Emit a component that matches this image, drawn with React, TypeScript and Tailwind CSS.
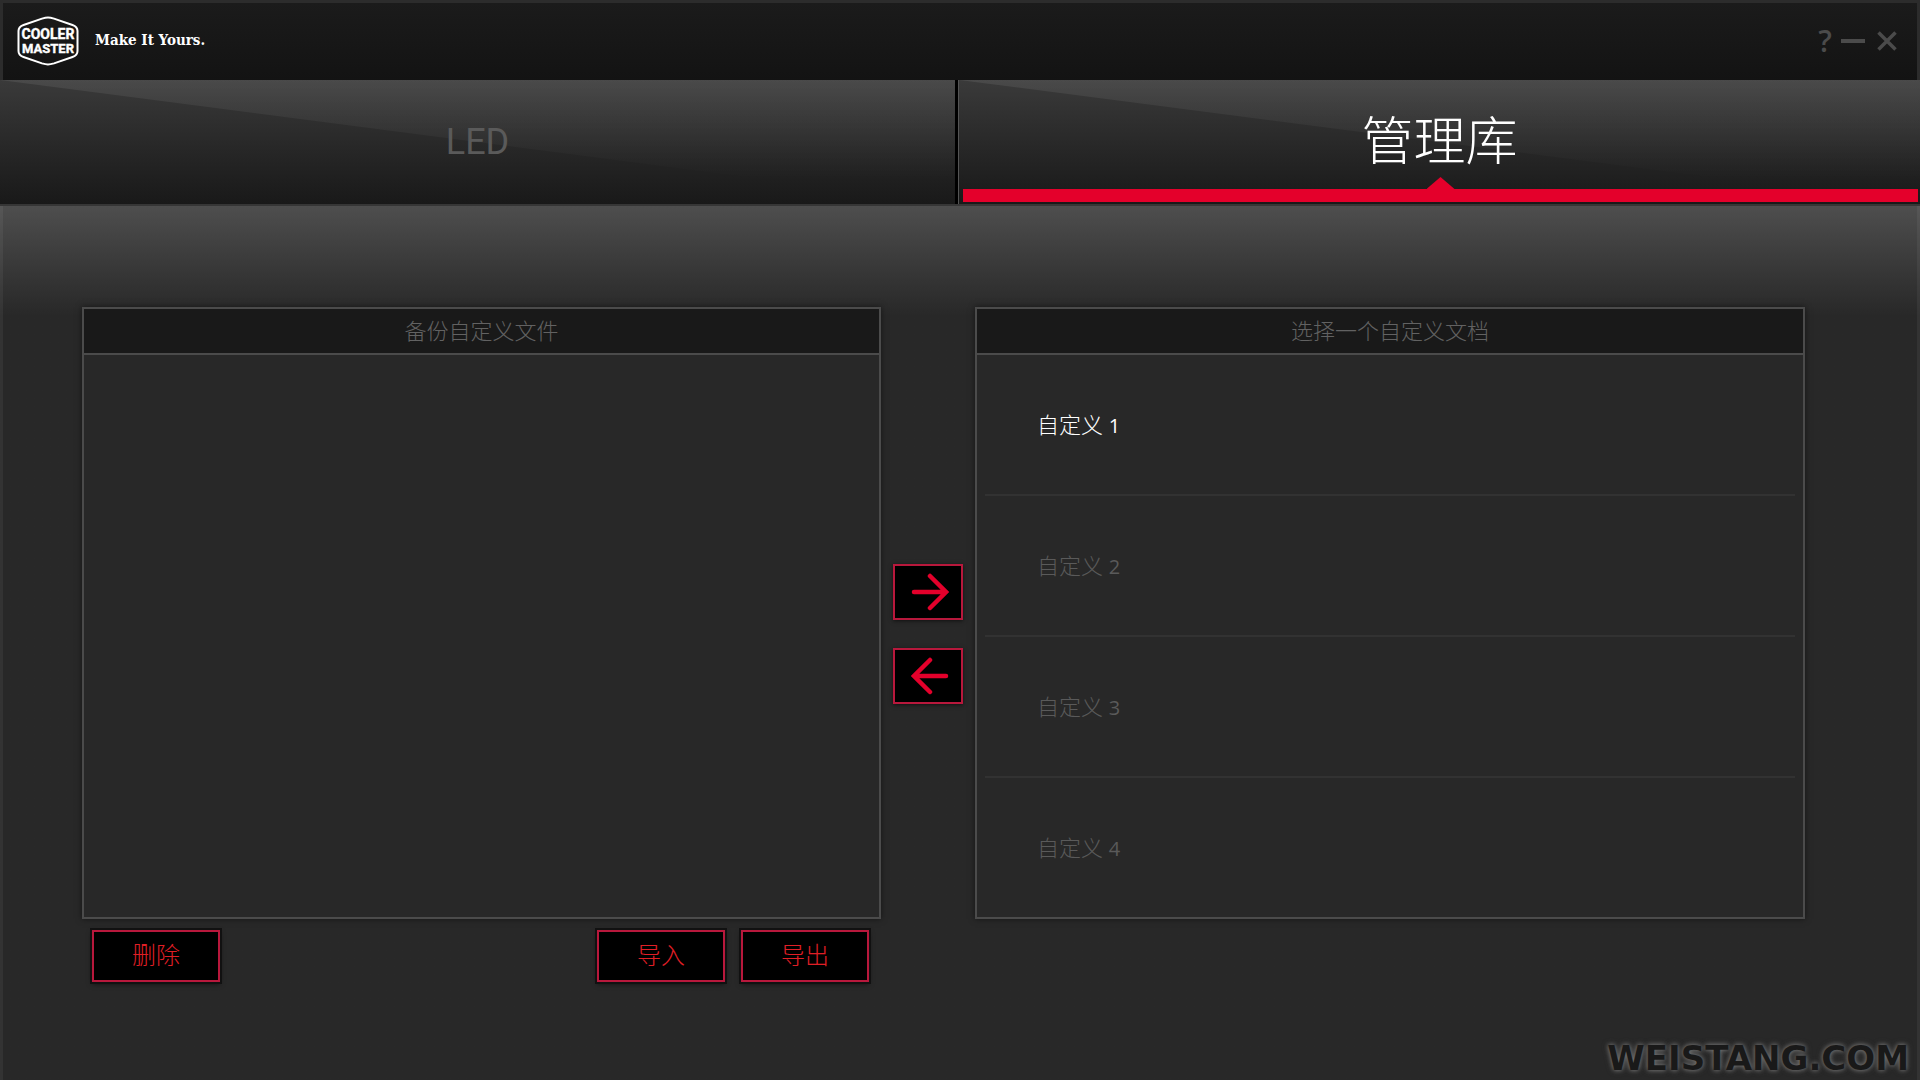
import { useState } from "react";

const tabs = ["LED", "管理库"];
const profiles = [1, 2, 3, 4];

function BrandMark() {
  return (
    <svg viewBox="0 0 62 50" className="h-[50px] w-[62px]" role="img" aria-label="Cooler Master">
      <path
        d="M31 1.5c2.2 0 4 .5 6 1.100l18.500 6.400c3.500 1.200 5 2.800 5 6v20c0 3.200-1.500 4.800-5 6L37 47.400c-2 .6-3.800 1.100-6 1.100s-4-.5-6-1.100L6.500 41c-3.500-1.200-5-2.800-5-6V15c0-3.200 1.500-4.800 5-6L25 2.600c2-.6 3.800-1.100 6-1.100z"
        fill="none"
        stroke="#fff"
        strokeWidth="2"
      />
      <g fill="#fff" stroke="#fff" strokeWidth="0.4" fontFamily="Roboto, sans-serif" fontSize="14" fontWeight="700" textAnchor="middle">
        <text x="31" y="23">COOLER</text>
        <text x="31" y="37" fontSize="13">MASTER</text>
      </g>
    </svg>
  );
}

function TitleBar() {
  return (
    <header className="flex h-20 items-center border-x-3 border-t-3 border-[#2c2c2c] bg-linear-to-b from-[#1b1b1b] to-[#131313] pr-4 pb-[2px] pl-[14px]">
      <BrandMark />
      <p className="ml-4 flex-1 font-['DejaVu_Serif_Condensed','DejaVu_Serif',serif] text-[15px] font-bold text-white">
        Make It Yours.
      </p>
      <div className="flex items-center gap-2 text-[#4b4b4b]">
        <button type="button" aria-label="帮助" className="w-4 text-center font-['Open_Sans',sans-serif] text-[30px] leading-8 font-semibold">
          ?
        </button>
        <button type="button" aria-label="最小化" className="flex h-8 w-6 items-center">
          <span className="h-1 w-full bg-[#4b4b4b]" />
        </button>
        <button type="button" aria-label="关闭" className="flex h-8 w-7 items-center justify-center">
          <svg viewBox="0 0 20 20" className="size-5" stroke="currentColor" strokeWidth="3.5" aria-hidden="true">
            <path d="M1.500 1.500l17 17M18.500 1.500l-17 17" />
          </svg>
        </button>
      </div>
    </header>
  );
}

function TabBar({ current, onChange }: { current: number; onChange: (i: number) => void }) {
  return (
    <nav role="tablist" className="grid h-[126px] grid-cols-2 border-b-2 border-[#363636]">
      {tabs.map((tab, i) => {
        const active = current === i;
        return (
          <button
            key={tab}
            type="button"
            role="tab"
            aria-selected={active}
            onClick={() => onChange(i)}
            className={`relative flex items-center justify-center bg-linear-to-b from-[#3a3a3a] to-[#191919] ${
              i === 0 ? "mr-[2px] border-r-3 border-black" : "-ml-[2px] border-l border-[#555]"
            }`}
          >
            <span className="absolute inset-0 bg-linear-to-b from-white/8 to-transparent to-80% [clip-path:polygon(0_0,100%_0,100%_100%)]" />
            <span
              className={`relative ${
                tab === "LED"
                  ? "font-['Roboto',sans-serif] text-[36px] leading-none"
                  : "-mt-2 font-['Noto_Sans_CJK_SC',sans-serif] text-[52px] leading-none font-light"
              } ${active ? "text-white" : "text-[#5a5a5a]"}`}
            >
              {tab}
            </span>
            {active && (
              <span className="absolute right-[2px] bottom-[2px] left-1 flex flex-col items-center">
                <span className="h-3 w-7 bg-[#e4002b] [clip-path:polygon(50%_0,100%_100%,0_100%)]" />
                <span className="h-[13px] w-full bg-[#e4002b]" />
              </span>
            )}
          </button>
        );
      })}
    </nav>
  );
}

function Panel({ title, children }: { title: string; children?: React.ReactNode }) {
  return (
    <section className="flex min-h-[612px] flex-col border-2 border-[#4b4b4b] bg-[#282828] shadow-[0_0_6px_rgba(0,0,0,0.5)]">
      <h2 className="border-b-2 border-[#4b4b4b] bg-[#191919] pb-[2px] text-center text-[22px] leading-[42px] font-light text-[#626262]">
        {title}
      </h2>
      {children}
    </section>
  );
}

function ArrowButton({ label, path }: { label: string; path: string }) {
  return (
    <button
      type="button"
      aria-label={label}
      className="flex h-14 w-[70px] items-center justify-center border-2 border-[#b8183c] bg-black pl-1 shadow-[0_1px_4px_rgba(0,0,0,0.6)]"
    >
      <svg viewBox="0 0 38 38" className="size-[38px]" fill="none" stroke="#e4002b" strokeWidth="4.5" strokeLinecap="round" aria-hidden="true">
        <path d={path} />
      </svg>
    </button>
  );
}

function ActionButton({ children }: { children: string }) {
  return (
    <button
      type="button"
      className="h-[52px] w-32 border-2 border-[#b8183c] bg-black pb-[2px] text-[24px] leading-none font-light text-[#e01f26] shadow-[0_0_0_2px_#111,0_2px_5px_rgba(0,0,0,0.6)]"
    >
      {children}
    </button>
  );
}

export default function App() {
  const [tab, setTab] = useState(1);
  const [selected, setSelected] = useState(1);

  return (
    <div lang="zh-CN" className="flex min-h-screen flex-col bg-[#282828] font-['Open_Sans','Noto_Sans_CJK_SC',sans-serif]">
      <TitleBar />
      <TabBar current={tab} onChange={setTab} />
      <main className="flex flex-1 flex-col border-x-3 border-white/5 bg-linear-to-b from-[#4e4e4e] to-[#282828] to-[110px]">
        <div className="grid grid-cols-[799fr_94px_830fr] pt-[101px] pr-28 pl-[79px]">
          <Panel title="备份自定义文件" />
          <div className="flex flex-col items-center gap-7 pt-[257px]">
            <ArrowButton label="载入到自定义文档" path="M3 19h32M19 3l16 16-16 16" />
            <ArrowButton label="备份到文件" path="M35 19H3M19 3L3 19l16 16" />
          </div>
          <Panel title="选择一个自定义文档">
            <ul className="flex flex-1 flex-col divide-y-2 divide-[#323232] px-2">
              {profiles.map((id) => (
                <li key={id} className="flex flex-1">
                  <button
                    type="button"
                    aria-pressed={selected === id}
                    onClick={() => setSelected(id)}
                    className={`flex-1 px-[52px] text-left text-[22px] leading-8 font-light ${
                      selected === id ? "text-white" : "text-[#5a5a5a]"
                    }`}
                  >
                    自定义 <span className="text-[20px] font-normal">{id}</span>
                  </button>
                </li>
              ))}
            </ul>
          </Panel>
          <div className="flex gap-4 pt-[11px] pr-3 pl-[10px]">
            <ActionButton>删除</ActionButton>
            <span className="flex-1" />
            <ActionButton>导入</ActionButton>
            <ActionButton>导出</ActionButton>
          </div>
        </div>
        <footer className="mt-auto pr-2 pb-1 text-right font-['DejaVu_Sans',sans-serif] text-[34px] leading-9 font-bold text-[#191919] [text-shadow:0_0_4px_#777,0_0_6px_#555]">
          WEISTANG.COM
        </footer>
      </main>
    </div>
  );
}
